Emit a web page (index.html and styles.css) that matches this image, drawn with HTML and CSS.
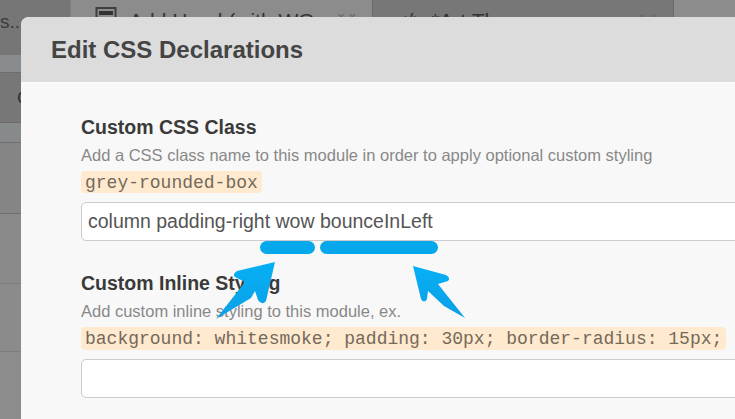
FILE: index.html
```html
<!DOCTYPE html>
<html lang="en">
<head>
    <meta charset="UTF-8">
    <meta name="viewport" content="width=device-width, initial-scale=1.0">
    <title>Edit CSS Declarations</title>
    <link rel="stylesheet" href="styles.css">
</head>
<body>
    <div class="page">
        <!-- dimmed editor behind the modal -->
        <div class="editor">
            <div class="sidebar">
                <div class="side-row side-top"><span class="side-name">s...</span></div>
                <div class="side-row side-tab"></div>
                <div class="side-row side-item"><span class="side-letter">C</span></div>
                <div class="side-row side-tab2"></div>
                <div class="side-row side-a"></div>
                <div class="side-row side-b"></div>
                <div class="side-row side-c"></div>
                <div class="side-row side-d"></div>
            </div>
            <div class="tabs">
                <div class="tab tab-first">
                    <svg class="tab-icon" width="22" height="22" viewBox="0 0 22 22">
                        <rect x="1.5" y="1" width="19" height="20" fill="none" stroke="#3f3f3f" stroke-width="2"/>
                        <rect x="4" y="4" width="14" height="4" fill="#333"/>
                    </svg>
                    <span class="tab-name">Add Head (with WO</span>
                    <span class="tab-close">× ×</span>
                </div>
                <div class="tab tab-active">
                    <span class="tab-name">&lt;/&gt; *Art Th</span>
                    <span class="tab-close">× ×</span>
                </div>
            </div>
        </div>

        <div class="modal">
            <div class="modal-header">
                <h1>Edit CSS Declarations</h1>
            </div>
            <div class="modal-body">
                <div class="field field-class">
                    <h2>Custom CSS Class</h2>
                    <p class="hint">Add a CSS class name to this module in order to apply optional custom styling</p>
                    <code>grey-rounded-box</code>
                    <div class="text-input">column padding-right wow bounceInLeft</div>
                </div>
                <div class="field field-inline">
                    <h2>Custom Inline Styling</h2>
                    <p class="hint">Add custom inline styling to this module, ex.</p>
                    <code>background: whitesmoke; padding: 30px; border-radius: 15px;</code>
                    <div class="text-input"></div>
                </div>
            </div>
        </div>

        <!-- annotations drawn over the screenshot -->
        <div class="pill pill-left"></div>
        <div class="pill pill-right"></div>
        <svg class="arrows" width="735" height="419" viewBox="0 0 735 419">
            <defs>
                <linearGradient id="arrowFill" x1="0" y1="1" x2="0" y2="0">
                    <stop offset="0" stop-color="#0b9fe6"/>
                    <stop offset="1" stop-color="#06b0f5"/>
                </linearGradient>
            </defs>
            <path fill="url(#arrowFill)" d="M275 262 L237 271 Q232 274 235 277 L245 282 L216 319 L251 298 L255 291 L258 300 Q262 306 266 301 Z"/>
            <path fill="url(#arrowFill)" d="M413 266 L446 275 Q451 278 448 281 L438 284 L465 318 L444 306 L428 291 L427 299 Q424 304 421 299 Z"/>
        </svg>
    </div>
</body>
</html>
```

FILE: styles.css
```css
html, body {
    margin: 0;
    padding: 0;
    overflow: hidden;
}

body {
    font-family: "Liberation Sans", Arial, sans-serif;
    background-color: #8c8c8c;
}

.page {
    position: relative;
    width: 735px;
    height: 419px;
    overflow: hidden;
}

/* editor behind the modal */
.editor {
    display: flex;
    height: 419px;
    background-color: #8c8c8c;
}

.sidebar {
    width: 71px;
    flex-shrink: 0;
    border-right: 1px solid #818181;
    box-sizing: border-box;
    display: flex;
    flex-direction: column;
}

.side-row {
    box-sizing: border-box;
    border-bottom: 1px solid #6d6d6d;
    overflow: hidden;
}

.side-top {
    height: 55px;
    background-color: #767676;
    border-bottom: none;
}

.side-name {
    display: block;
    margin-top: 11px;
    font-size: 19px;
    color: #3a3a3a;
}

.side-tab {
    height: 18px;
    background-color: #888c8e;
}

.side-item {
    height: 50px;
    background-color: #777;
}

.side-letter {
    display: block;
    margin: 14px 0 0 17px;
    font-size: 19px;
    color: #333;
}

.side-tab2 {
    height: 20px;
    background-color: #868a8b;
}

.side-a {
    height: 71px;
    background-color: #858585;
}

.side-b {
    height: 70px;
    background-color: #8a8a8a;
    border-bottom-color: #7c7c7c;
}

.side-c {
    height: 68px;
    background-color: #8b8b8b;
    border-bottom-color: #7c7c7c;
}

.side-d {
    flex: 1;
    background-color: #8c8c8c;
    border-bottom: none;
}

.tabs {
    display: flex;
    align-items: flex-start;
}

.tab {
    box-sizing: border-box;
    width: 301px;
    height: 40px;
    display: flex;
    gap: 12px;
    padding-top: 7px;
    font-size: 21px;
    color: #333;
}

.tab-first {
    padding-left: 24px;
}

.tab-active {
    width: 302px;
    padding-left: 22px;
    background-color: #777;
    border-left: 1px solid #6b6b6b;
    border-right: 1px solid #6b6b6b;
}

.tab-name {
    flex: 1;
    white-space: nowrap;
    padding-top: 2px;
}

.tab-close {
    padding: 2px 16px 0 0;
    color: #666;
    font-size: 13px;
}

/* modal */
.modal {
    position: absolute;
    left: 21px;
    top: 17px;
    width: 800px;
    height: 460px;
    background-color: #f8f8f8;
    border-radius: 8px 0 0 0;
    overflow: hidden;
}

.modal-header {
    box-sizing: border-box;
    height: 65px;
    padding: 18px 30px 0;
    background-color: #dcdcdc;
}

.modal-header h1 {
    margin: 0;
    font-size: 24px;
    line-height: 29px;
    color: #444;
}

.modal-body {
    padding: 32px 60px 0;
    border-top: 2px solid #fbfbfb;
}

.field h2 {
    margin: 0;
    font-size: 19.5px;
    line-height: 22px;
    color: #3a3a3a;
}

.field-inline {
    margin-top: 31px;
}

.hint {
    margin: 7px 0 0;
    font-size: 16.5px;
    line-height: 20px;
    color: #888;
}

code {
    display: block;
    width: fit-content;
    margin-top: 6px;
    padding: 0 4px;
    height: 22px;
    line-height: 25px;
    font-family: "Liberation Mono", "Courier New", monospace;
    font-size: 18px;
    color: #746a5a;
    background-color: #ffe9cf;
    border-radius: 4px;
    white-space: nowrap;
}

.field-inline code {
    height: 23px;
}

.text-input {
    box-sizing: border-box;
    width: 700px;
    height: 39px;
    margin-top: 9px;
    padding-left: 6px;
    line-height: 37px;
    font-size: 19.5px;
    color: #555;
    background-color: #fff;
    border: 1px solid #ccc;
    border-radius: 5px;
}

/* annotations */
.pill {
    position: absolute;
    top: 241px;
    height: 13px;
    background-color: #05a8eb;
    border-radius: 7px;
}

.pill-left {
    left: 260px;
    width: 55px;
}

.pill-right {
    left: 320px;
    width: 118px;
}

.arrows {
    position: absolute;
    left: 0;
    top: 0;
}
```
